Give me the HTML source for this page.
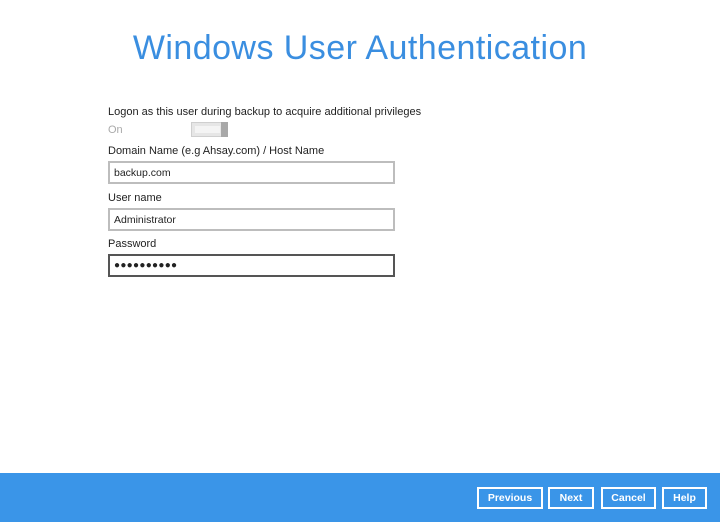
<!DOCTYPE html>
<html><head><style>
body{margin:0;width:720px;height:522px;background:#fff;font-family:"Liberation Sans",sans-serif;position:relative;overflow:hidden;color:#222}
.t{position:absolute;left:0;width:720px;text-align:center;top:29px;font-size:34px;color:#3a8ee0;letter-spacing:0.45px}
.l{position:absolute;left:108px;font-size:11px;white-space:nowrap}
.in{position:absolute;left:108px;width:279px;height:19px;border:2px solid #bdbdbd;font-size:10.5px;line-height:20px;padding-left:4px;box-sizing:content-box}
.ft{position:absolute;left:0;top:473px;width:720px;height:49px;background:#3a95e8}
.b{position:absolute;top:487px;height:18px;border:2px solid #fff;color:#fff;font-size:10.5px;font-weight:bold;text-align:center;line-height:18px;box-sizing:content-box}
</style></head><body>
<div class="t">Windows User Authentication</div>
<div class="l" style="top:106px">Logon as this user during backup to acquire additional privileges</div>
<div class="l" style="top:124px;color:#aaa">On</div>
<div style="position:absolute;left:191px;top:122px;width:37px;height:15px;background:#e6e6e6;border:1px solid #cfcfcf;box-sizing:border-box"></div>
<div style="position:absolute;left:195px;top:126px;width:25px;height:7px;background:#f4f4f4"></div>
<div style="position:absolute;left:221px;top:122px;width:7px;height:15px;background:#a8a8a8"></div>
<div class="l" style="top:145px">Domain Name (e.g Ahsay.com) / Host Name</div>
<div class="in" style="top:161px">backup.com</div>
<div class="l" style="top:192px">User name</div>
<div class="in" style="top:208px">Administrator</div>
<div class="l" style="top:238px">Password</div>
<div class="in" style="top:254px;border-color:#555;font-size:10px;letter-spacing:0.3px">●●●●●●●●●●</div>
<div class="ft"></div>
<div class="b" style="left:477px;width:62px">Previous</div>
<div class="b" style="left:548px;width:42px">Next</div>
<div class="b" style="left:601px;width:51px">Cancel</div>
<div class="b" style="left:662px;width:41px">Help</div>
</body></html>
